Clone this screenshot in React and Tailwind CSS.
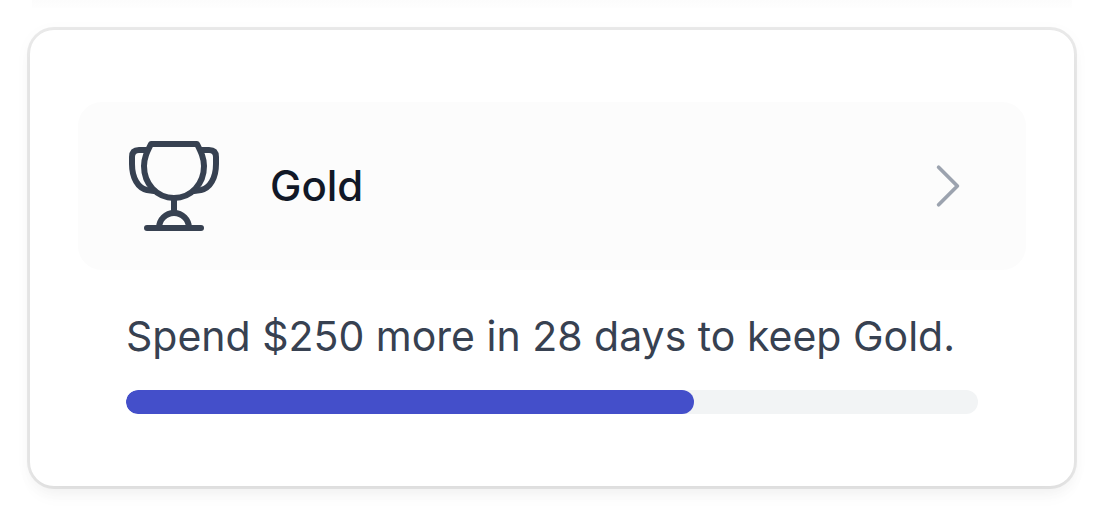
import React from "react";

// Trophy shown next to the tier name
const TrophyIcon = ({ className }) => (
  <svg
    viewBox="0 0 96 96"
    fill="none"
    stroke="currentColor"
    strokeWidth="6"
    strokeLinecap="round"
    strokeLinejoin="round"
    aria-hidden="true"
    className={className}
  >
    {/* cup */}
    <path d="M25 6H71C75 14 78 20 78 28C78 46 65 60 48 60S18 46 18 28C18 20 21 14 25 6Z" />
    {/* handles */}
    <path d="M21 12H13Q6 12 6 19V26C6 40 12 50 21 52L28 53" />
    <path d="M75 12H83Q90 12 90 19V26C90 40 84 50 75 52L68 53" />
    {/* stem and base */}
    <path d="M48 60V75" />
    <path d="M33 90A15 15 0 0 1 63 90" />
    <path d="M21 90H75" />
  </svg>
);

const ChevronIcon = ({ className }) => (
  <svg
    viewBox="0 0 24 24"
    fill="none"
    stroke="currentColor"
    strokeWidth="1.5"
    strokeLinecap="round"
    strokeLinejoin="round"
    aria-hidden="true"
    className={className}
  >
    <path d="M8.25 4.5l7.5 7.5-7.5 7.5" />
  </svg>
);

const TierCard = ({ tier, amount, days, spent, goal }) => {
  const percent = (spent / goal) * 100;

  return (
    <section className="rounded-3xl bg-white px-12 py-18 shadow-[0_0_0_3px_rgba(0,0,0,0.08),0_12px_18px_-3px_rgba(0,0,0,0.04),0_3px_18px_0_rgba(0,0,0,0.04)]">
      <button
        type="button"
        className="flex w-full items-center gap-12 rounded-3xl bg-[#fcfcfc] px-12 py-9 text-left"
      >
        <TrophyIcon className="size-24 text-[#374151]" />
        <span className="flex-1 text-[42px] leading-[60px] font-medium text-[#111827]">
          {tier}
        </span>
        <ChevronIcon className="size-15 text-[#9ca3af]" />
      </button>

      <div className="mt-9 px-12">
        <p className="text-[41px] leading-[60px] text-[#374151]">
          Spend ${amount} more in {days} days to keep {tier}.
        </p>
        <div
          role="progressbar"
          aria-label={`Progress to keep ${tier}`}
          aria-valuenow={spent}
          aria-valuemin={0}
          aria-valuemax={goal}
          className="mt-6 h-6 overflow-hidden rounded-full bg-[#f2f4f5]"
        >
          <div
            className="h-full rounded-full bg-[#444fca]"
            style={{ width: `${percent}%` }}
          />
        </div>
      </div>
    </section>
  );
};

export default function App() {
  return (
    <main className="bg-white font-['Inter',sans-serif]">
      <div className="mx-8 h-2 bg-linear-to-b from-[#fcfcfc] to-[#fefefe]" />
      <div className="px-[30px] pt-[22px] pb-[30px]">
        <TierCard tier="Gold" amount={250} days={28} spent={500} goal={750} />
      </div>
    </main>
  );
}
